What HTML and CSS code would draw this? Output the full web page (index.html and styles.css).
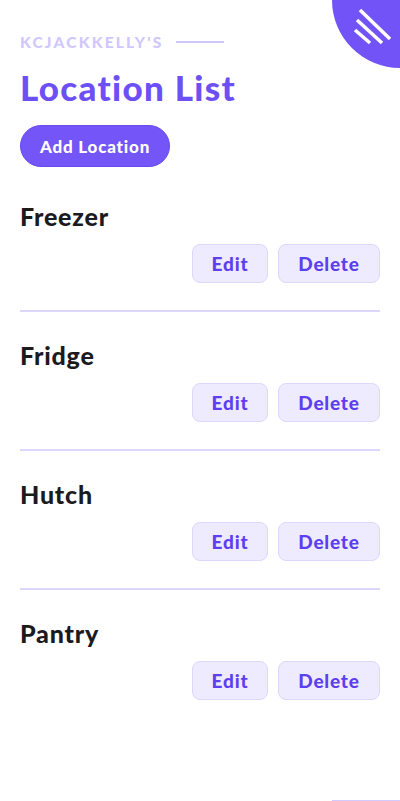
FILE: index.html
```html
<!doctype html>
<html lang="en">
  <head>
    <meta charset="UTF-8" />
    <meta name="viewport" content="width=device-width, initial-scale=1" />
    <title>Location List</title>
    <link rel="stylesheet" href="styles.css">
  </head>
  <body>
    <!-- corner menu -->
    <button class="menu-corner" type="button" aria-label="Menu">
      <svg width="68" height="68" viewBox="0 0 68 68">
        <g stroke="#fff" stroke-width="3.5" stroke-linecap="butt">
          <line x1="28" y1="10" x2="58" y2="39" />
          <line x1="25" y1="20" x2="50" y2="43" />
          <line x1="23" y1="30" x2="38" y2="43" />
        </g>
      </svg>
    </button>

    <div class="container">
      <div class="brand">
        <span>KCJACKKELLY'S</span>
        <span class="brand-line"></span>
      </div>
      <h1>Location List</h1>
      <button type="button" class="btn-primary">Add Location</button>

      <div class="location-list">
        <div class="location">
          <h2>Freezer</h2>
          <div class="actions">
            <button type="button" class="btn-soft edit">Edit</button>
            <button type="button" class="btn-soft delete">Delete</button>
          </div>
        </div>
        <div class="location">
          <h2>Fridge</h2>
          <div class="actions">
            <button type="button" class="btn-soft edit">Edit</button>
            <button type="button" class="btn-soft delete">Delete</button>
          </div>
        </div>
        <div class="location">
          <h2>Hutch</h2>
          <div class="actions">
            <button type="button" class="btn-soft edit">Edit</button>
            <button type="button" class="btn-soft delete">Delete</button>
          </div>
        </div>
        <div class="location last">
          <h2>Pantry</h2>
          <div class="actions">
            <button type="button" class="btn-soft edit">Edit</button>
            <button type="button" class="btn-soft delete">Delete</button>
          </div>
        </div>
      </div>
    </div>

    <div class="footer-line"></div>
  </body>
</html>
```

FILE: styles.css
```css
body {
  margin: 0;
  font-family: Lato, "Open Sans", sans-serif;
  background: #fff;
  color: #1b1b1f;
  position: relative;
  min-height: 801px;
  overflow: hidden;
}
.container {
  padding: 32px 20px 0 20px;
}
.menu-corner {
  position: absolute;
  top: 0;
  right: 0;
  width: 68px;
  height: 68px;
  padding: 0;
  border: none;
  background: #7253f7;
  border-bottom-left-radius: 68px;
  cursor: pointer;
}
.menu-corner svg {
  display: block;
}
.brand {
  display: flex;
  align-items: center;
  gap: 12px;
  color: #d0c7fd;
  font-size: 15.5px;
  font-weight: 900;
  letter-spacing: 2.2px;
  line-height: 20px;
}
.brand-line {
  width: 48px;
  height: 2px;
  background: #d0c7fd;
}
h1 {
  margin: 15px 0 0 0;
  color: #6d4ff6;
  font-size: 35px;
  font-weight: 900;
  letter-spacing: 1.3px;
  line-height: 40px;
}
.btn-primary {
  margin-top: 18px;
  width: 150px;
  height: 42px;
  border: 1px solid #6a4af0;
  border-radius: 21px;
  background: #7455f8;
  color: #fff;
  font-family: inherit;
  font-size: 17px;
  font-weight: 900;
  letter-spacing: 0.8px;
  cursor: pointer;
}
.location-list {
  margin-top: 34px;
}
.location {
  border-bottom: 2px solid #ddd7fd;
  padding-bottom: 27px;
  margin-bottom: 28px;
}
.location.last {
  border-bottom: none;
}
h2 {
  margin: 0;
  font-size: 25px;
  font-weight: 900;
  letter-spacing: 0.8px;
  line-height: 30px;
}
.actions {
  display: flex;
  justify-content: flex-end;
  gap: 10px;
  margin-top: 13px;
}
.btn-soft {
  height: 39px;
  padding: 0;
  border: 1.5px solid #ddd6fd;
  border-radius: 8px;
  background: #efebfe;
  color: #5d3ff0;
  font-family: inherit;
  font-size: 19px;
  font-weight: 900;
  letter-spacing: 0.8px;
  cursor: pointer;
}
.btn-soft.edit {
  width: 76px;
}
.btn-soft.delete {
  width: 102px;
}
.footer-line {
  position: absolute;
  right: 0;
  bottom: 0;
  width: 68px;
  height: 1px;
  background: #d3cbfd;
}
```
